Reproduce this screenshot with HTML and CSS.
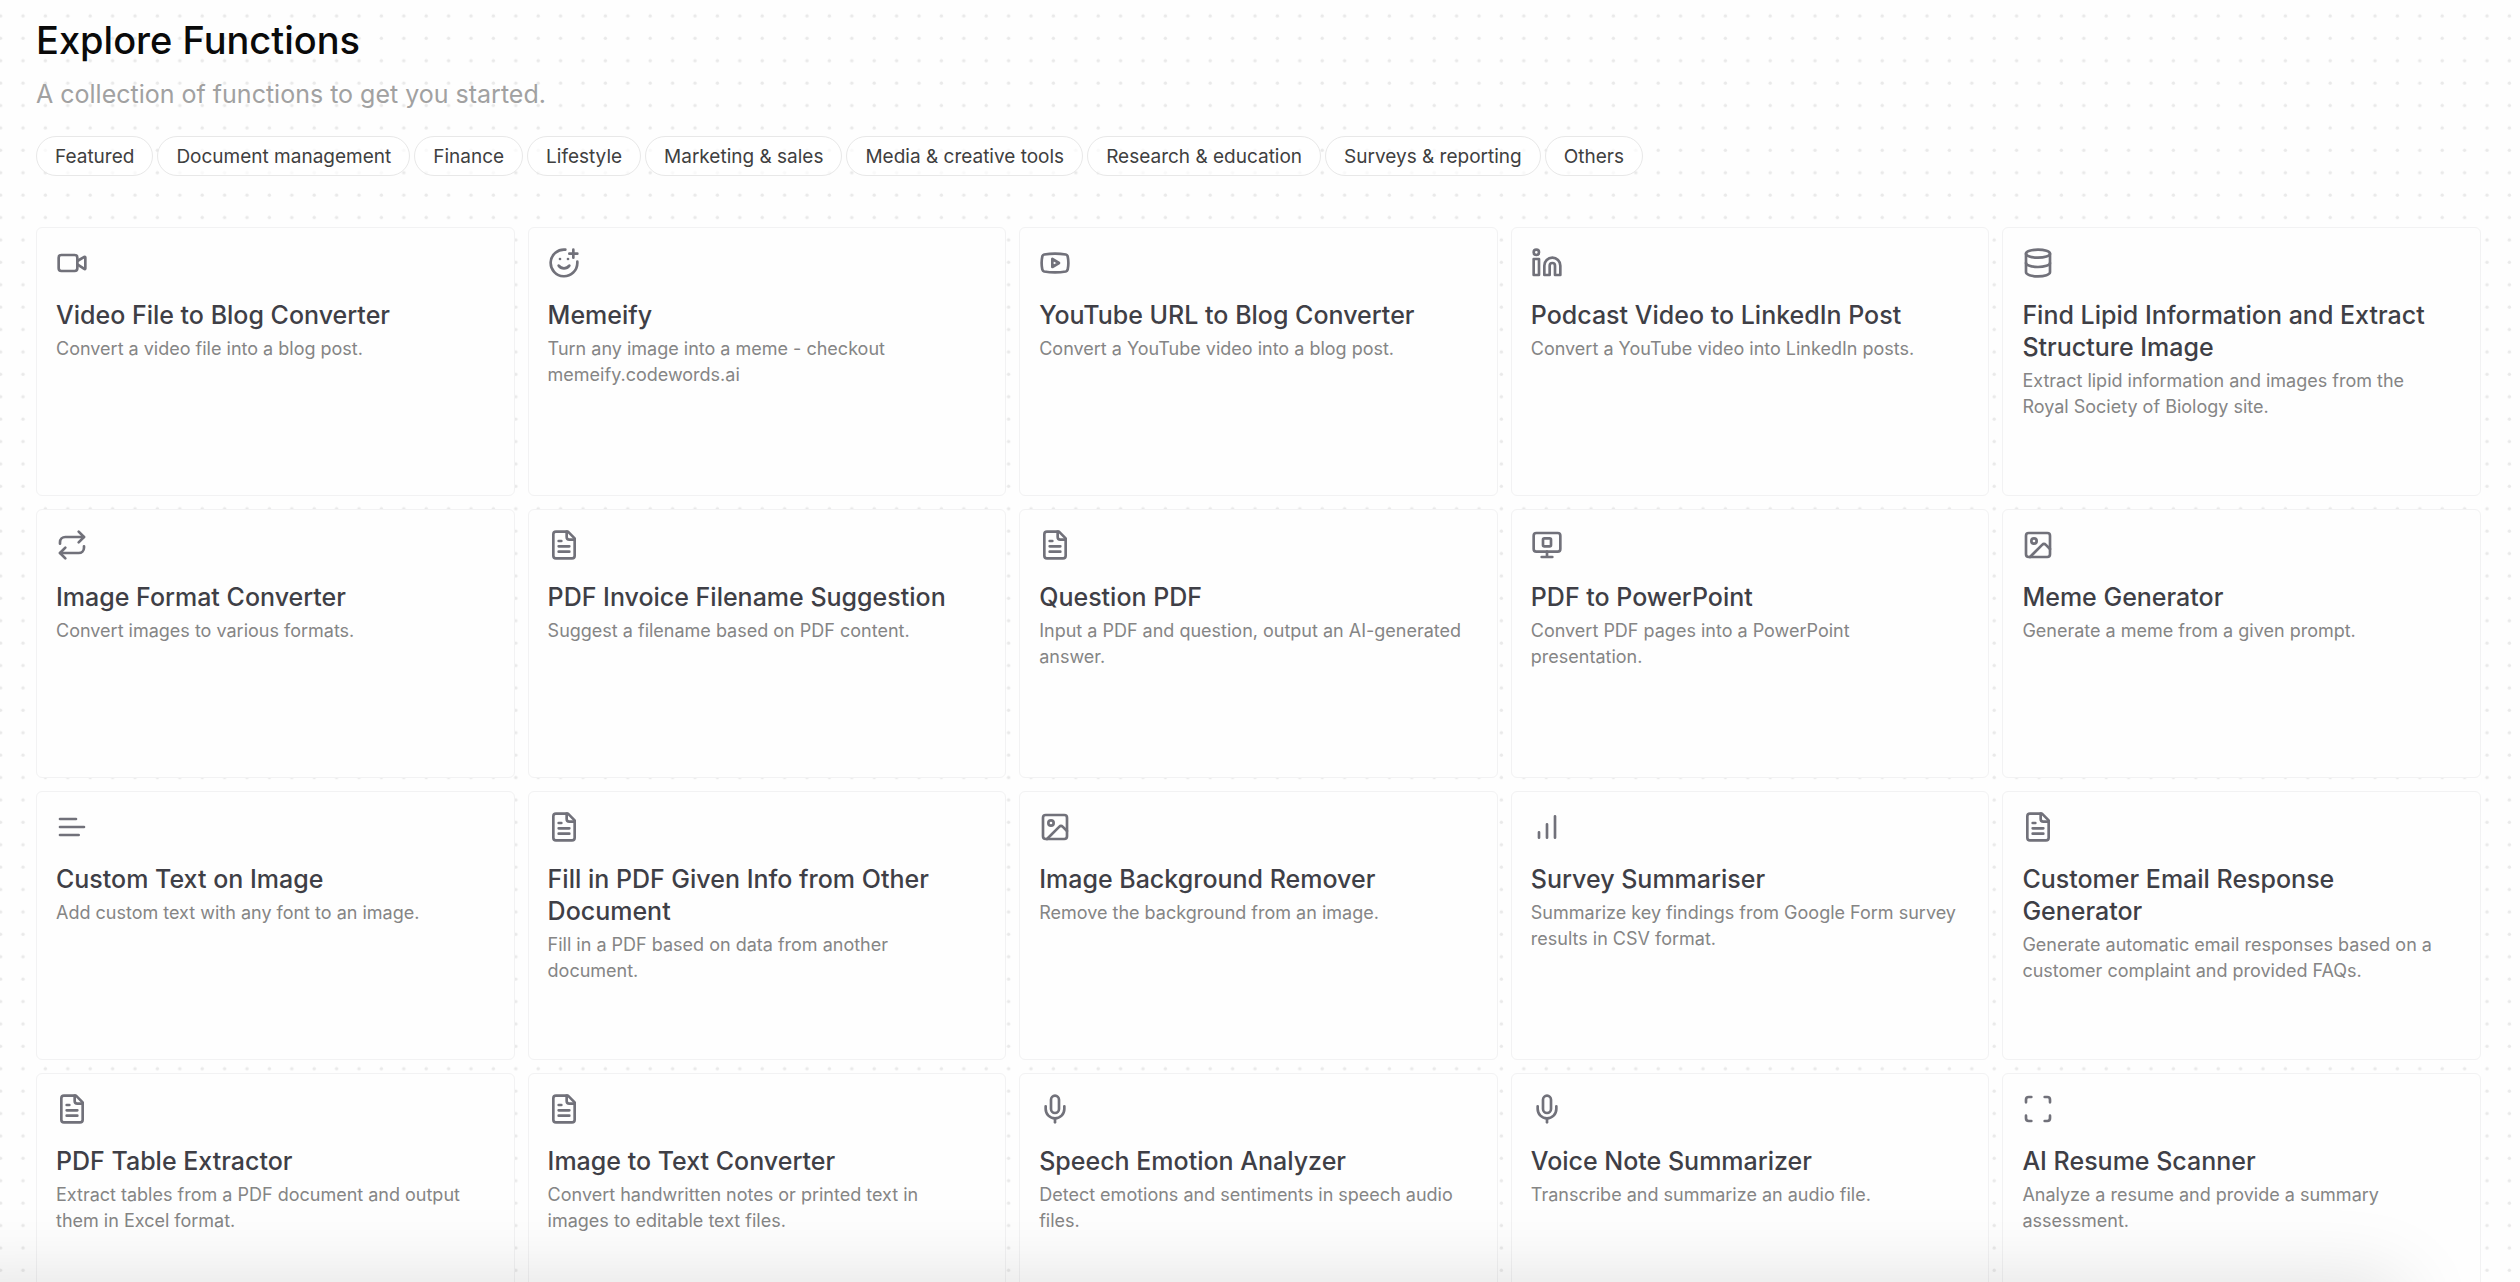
FILE: index.html
```html
<!DOCTYPE html>
<html lang="en">
<head>
<meta charset="utf-8">
<meta name="viewport" content="width=device-width, initial-scale=1">
<title>Explore Functions</title>
<link rel="stylesheet" href="styles.css">
</head>
<body>
<svg class="sprite" aria-hidden="true">
  <symbol id="video" viewBox="0 0 24 24"><path d="m16 13 5.223 3.482a.5.5 0 0 0 .777-.416V7.87a.5.5 0 0 0-.752-.432L16 10.5"/><rect x="2" y="6" width="14" height="12" rx="2"/></symbol>
  <symbol id="smile-plus" viewBox="0 0 24 24"><path d="M22 11v1a10 10 0 1 1-9-10"/><path d="M8 14s1.5 2 4 2 4-2 4-2"/><path d="M9 9h.01M15 9h.01M16 5h6M19 2v6"/></symbol>
  <symbol id="youtube" viewBox="0 0 24 24"><path d="M2.5 17a24.12 24.12 0 0 1 0-10 2 2 0 0 1 1.4-1.4 49.56 49.56 0 0 1 16.2 0A2 2 0 0 1 21.5 7a24.12 24.12 0 0 1 0 10 2 2 0 0 1-1.4 1.4 49.55 49.55 0 0 1-16.2 0A2 2 0 0 1 2.5 17"/><path d="m10 15 5-3-5-3z"/></symbol>
  <symbol id="linkedin" viewBox="0 0 24 24"><path d="M16 8a6 6 0 0 1 6 6v7h-4v-7a2 2 0 0 0-4 0v7h-4v-7a6 6 0 0 1 6-6z"/><rect x="2" y="9" width="4" height="12"/><circle cx="4" cy="4" r="2"/></symbol>
  <symbol id="database" viewBox="0 0 24 24"><ellipse cx="12" cy="5" rx="9" ry="3"/><path d="M3 5v14a9 3 0 0 0 18 0V5"/><path d="M3 12a9 3 0 0 0 18 0"/></symbol>
  <symbol id="repeat" viewBox="0 0 24 24"><path d="m17 2 4 4-4 4"/><path d="M3 11v-1a4 4 0 0 1 4-4h14"/><path d="m7 22-4-4 4-4"/><path d="M21 13v1a4 4 0 0 1-4 4H3"/></symbol>
  <symbol id="file-text" viewBox="0 0 24 24"><path d="M15 2H6a2 2 0 0 0-2 2v16a2 2 0 0 0 2 2h12a2 2 0 0 0 2-2V7z"/><path d="M14 2v4a2 2 0 0 0 2 2h4"/><path d="M10 9H8M16 13H8M16 17H8"/></symbol>
  <symbol id="monitor-stop" viewBox="0 0 24 24"><rect x="2" y="3" width="20" height="14" rx="2"/><rect x="9" y="7" width="6" height="6" rx="1"/><path d="M12 17v4M8 21h8"/></symbol>
  <symbol id="image" viewBox="0 0 24 24"><rect x="3" y="3" width="18" height="18" rx="2"/><circle cx="9" cy="9" r="2"/><path d="m21 15-3.086-3.086a2 2 0 0 0-2.828 0L6 21"/></symbol>
  <symbol id="align-left" viewBox="0 0 24 24"><path d="M21 12H3M15 6H3M17 18H3"/></symbol>
  <symbol id="bars" viewBox="0 0 24 24"><path d="M12 20V10M18 20V4M6 20v-4"/></symbol>
  <symbol id="mic" viewBox="0 0 24 24"><path d="M12 2a3 3 0 0 0-3 3v7a3 3 0 0 0 6 0V5a3 3 0 0 0-3-3Z"/><path d="M19 10v2a7 7 0 0 1-14 0v-2"/><path d="M12 19v3"/></symbol>
  <symbol id="scan" viewBox="0 0 24 24"><path d="M3 7V5a2 2 0 0 1 2-2h2M17 3h2a2 2 0 0 1 2 2v2M21 17v2a2 2 0 0 1-2 2h-2M7 21H5a2 2 0 0 1-2-2v-2"/></symbol>
</svg>
<div class="shell">
  <main class="content">
    <h1 class="heading">Explore Functions</h1>
    <p class="lead">A collection of functions to get you started.</p>
    <nav class="filters" aria-label="Categories">
      <button class="pill" type="button">Featured</button>
      <button class="pill" type="button">Document management</button>
      <button class="pill" type="button">Finance</button>
      <button class="pill" type="button">Lifestyle</button>
      <button class="pill" type="button">Marketing &amp; sales</button>
      <button class="pill" type="button">Media &amp; creative tools</button>
      <button class="pill" type="button">Research &amp; education</button>
      <button class="pill" type="button">Surveys &amp; reporting</button>
      <button class="pill" type="button">Others</button>
    </nav>
    <section class="grid" aria-label="Functions">
      <a class="card" href="#"><svg class="icon"><use href="#video"/></svg><h2 class="title">Video File to Blog Converter</h2><p class="desc">Convert a video file into a blog post.</p></a>
      <a class="card" href="#"><svg class="icon"><use href="#smile-plus"/></svg><h2 class="title">Memeify</h2><p class="desc">Turn any image into a meme - checkout memeify.codewords.ai</p></a>
      <a class="card" href="#"><svg class="icon"><use href="#youtube"/></svg><h2 class="title">YouTube URL to Blog Converter</h2><p class="desc">Convert a YouTube video into a blog post.</p></a>
      <a class="card" href="#"><svg class="icon"><use href="#linkedin"/></svg><h2 class="title">Podcast Video to LinkedIn Post</h2><p class="desc">Convert a YouTube video into LinkedIn posts.</p></a>
      <a class="card" href="#"><svg class="icon"><use href="#database"/></svg><h2 class="title">Find Lipid Information and Extract Structure Image</h2><p class="desc">Extract lipid information and images from the Royal Society of Biology site.</p></a>

      <a class="card" href="#"><svg class="icon"><use href="#repeat"/></svg><h2 class="title">Image Format Converter</h2><p class="desc">Convert images to various formats.</p></a>
      <a class="card" href="#"><svg class="icon"><use href="#file-text"/></svg><h2 class="title">PDF Invoice Filename Suggestion</h2><p class="desc">Suggest a filename based on PDF content.</p></a>
      <a class="card" href="#"><svg class="icon"><use href="#file-text"/></svg><h2 class="title">Question PDF</h2><p class="desc">Input a PDF and question, output an AI-generated answer.</p></a>
      <a class="card" href="#"><svg class="icon"><use href="#monitor-stop"/></svg><h2 class="title">PDF to PowerPoint</h2><p class="desc">Convert PDF pages into a PowerPoint presentation.</p></a>
      <a class="card" href="#"><svg class="icon"><use href="#image"/></svg><h2 class="title">Meme Generator</h2><p class="desc">Generate a meme from a given prompt.</p></a>

      <a class="card" href="#"><svg class="icon"><use href="#align-left"/></svg><h2 class="title">Custom Text on Image</h2><p class="desc">Add custom text with any font to an image.</p></a>
      <a class="card" href="#"><svg class="icon"><use href="#file-text"/></svg><h2 class="title">Fill in PDF Given Info from Other Document</h2><p class="desc">Fill in a PDF based on data from another document.</p></a>
      <a class="card" href="#"><svg class="icon"><use href="#image"/></svg><h2 class="title">Image Background Remover</h2><p class="desc">Remove the background from an image.</p></a>
      <a class="card" href="#"><svg class="icon"><use href="#bars"/></svg><h2 class="title">Survey Summariser</h2><p class="desc">Summarize key findings from Google Form survey results in CSV format.</p></a>
      <a class="card" href="#"><svg class="icon"><use href="#file-text"/></svg><h2 class="title">Customer Email Response Generator</h2><p class="desc">Generate automatic email responses based on a customer complaint and provided FAQs.</p></a>

      <a class="card" href="#"><svg class="icon"><use href="#file-text"/></svg><h2 class="title">PDF Table Extractor</h2><p class="desc">Extract tables from a PDF document and output them in Excel format.</p></a>
      <a class="card" href="#"><svg class="icon"><use href="#file-text"/></svg><h2 class="title">Image to Text Converter</h2><p class="desc">Convert handwritten notes or printed text in images to editable text files.</p></a>
      <a class="card" href="#"><svg class="icon"><use href="#mic"/></svg><h2 class="title">Speech Emotion Analyzer</h2><p class="desc">Detect emotions and sentiments in speech audio files.</p></a>
      <a class="card" href="#"><svg class="icon"><use href="#mic"/></svg><h2 class="title">Voice Note Summarizer</h2><p class="desc">Transcribe and summarize an audio file.</p></a>
      <a class="card" href="#"><svg class="icon"><use href="#scan"/></svg><h2 class="title">AI Resume Scanner</h2><p class="desc">Analyze a resume and provide a summary assessment.</p></a>
    </section>
  </main>
</div>
</body>
</html>
```
FILE: styles.css
```css
*, *::before, *::after { box-sizing: border-box; }

body {
  margin: 0;
  background: #fefefe;
  color: #3f3f46;
  font-family: Inter, "Liberation Sans", sans-serif;
}

.sprite { position: absolute; width: 0; height: 0; }

/* The list scrolls inside the window, over a dotted canvas. */
.shell {
  position: relative;
  height: 100vh;
  overflow: hidden;
  background-color: #fefefe;
  background-image: url("data:image/svg+xml,%3Csvg xmlns='http://www.w3.org/2000/svg' width='112' height='112'%3E%3Cpattern id='d' width='.2' height='.2'%3E%3Ccircle cx='12' cy='12' r='1.7' fill='%23e9e9e9'/%3E%3C/pattern%3E%3Crect width='112' height='112' fill='url(%23d)'/%3E%3C/svg%3E");
  background-position: 11px 4px;
}

.shell::after {
  content: "";
  position: absolute;
  top: 100%;
  left: -80px;
  right: 120px;
  height: 80px;
  box-shadow: 0 0 80px rgba(0, 0, 0, 0.13);
  pointer-events: none;
}

.content {
  height: 100%;
  padding: 16px 39px 40px 36px;
  overflow-y: auto;
  scrollbar-width: none;
}

.heading {
  margin: 0;
  color: #0a0a0a;
  font-size: 38px;
  font-weight: 500;
  line-height: 48px;
}

.lead {
  margin: 12px 0 24px;
  color: #a1a1a1;
  font-size: 25px;
  line-height: 36px;
}

.filters { display: flex; flex-wrap: wrap; gap: 4px; }

.pill {
  height: 40px;
  padding: 0 18px;
  border: 1px solid #e8e8e8;
  border-radius: 20px;
  background: rgba(255, 255, 255, 0.7);
  color: #404040;
  font: inherit;
  font-size: 19px;
}

.grid {
  display: grid;
  grid-template-columns: repeat(5, minmax(0, 1fr));
  grid-auto-rows: minmax(269px, auto);
  gap: 13px;
  margin-top: 51px;
}

.card {
  display: flex;
  flex-direction: column;
  align-items: flex-start;
  padding: 19px 29px 19px 19px;
  border: 1px solid #f2f2f3;
  border-radius: 6px;
  background: #fefefe;
  color: inherit;
  text-decoration: none;
}

.icon {
  width: 32px;
  height: 32px;
  fill: none;
  stroke: #71717a;
  stroke-width: 2;
  stroke-linecap: round;
  stroke-linejoin: round;
}

.title {
  margin: 20px 0 5px;
  font-size: 25px;
  font-weight: 500;
  line-height: 32px;
}

.desc {
  margin: 0;
  color: #858585;
  font-size: 18px;
  line-height: 26px;
}
```
